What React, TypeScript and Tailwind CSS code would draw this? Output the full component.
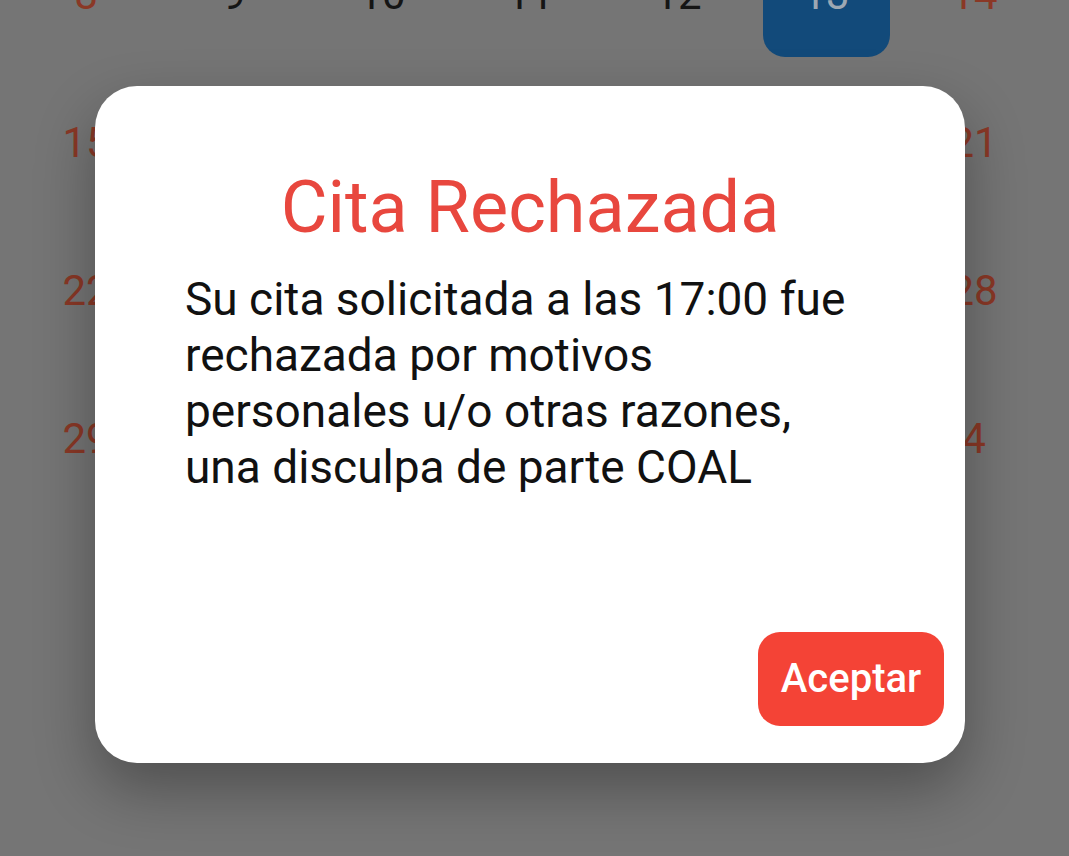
// Calendar behind a rejected-appointment dialog.
const rows: { n: string; tone: "red" | "dark" | "sel" }[][] = [
	[
		{ n: "8", tone: "red" },
		{ n: "9", tone: "dark" },
		{ n: "10", tone: "dark" },
		{ n: "11", tone: "dark" },
		{ n: "12", tone: "dark" },
		{ n: "13", tone: "sel" },
		{ n: "14", tone: "red" },
	],
	["15", "16", "17", "18", "19", "20", "21"].map((n) => ({ n, tone: "red" as const })),
	["22", "23", "24", "25", "26", "27", "28"].map((n) => ({ n, tone: "red" as const })),
	["29", "30", "1", "2", "3", "4", "4"].map((n, i) => ({ n: i === 6 ? "4" : n, tone: "red" as const })),
]

function Day({ n, tone }: { n: string; tone: "red" | "dark" | "sel" }) {
	if (tone === "sel") {
		return (
			<div className="flex h-[126px] w-[127px] items-center justify-center rounded-[22px] bg-[#124a7a] text-[#9ea8b3]">
				{n}
			</div>
		)
	}
	return <div className={tone === "red" ? "text-[#8a3826]" : "text-[#151515]"}>{n}</div>
}

export default function App() {
	return (
		<div className="relative h-[856px] w-[1069px] overflow-hidden bg-[#757575] font-['Roboto',sans-serif]">
			<div className="-mt-[80px] pl-[12px] text-[42px]">
				{rows.map((row, r) => (
					<div key={r} className="grid h-[148px] w-[1036px] grid-cols-7 items-center justify-items-center">
						{row.map((d, i) => (
							<Day key={i} n={d.n} tone={d.tone} />
						))}
					</div>
				))}
			</div>

			<div className="absolute left-[95px] top-[86px] flex h-[677px] w-[870px] flex-col rounded-[42px] bg-white shadow-[0_26px_60px_rgba(0,0,0,0.32)]">
				<h2 className="pt-[80px] text-center text-[72px] leading-[84px] text-[#e8473e]">Cita Rechazada</h2>
				<p className="mt-[21px] px-[90px] text-[46px] leading-[56px] text-[#111]">
					Su cita solicitada a las 17:00 fue rechazada por motivos personales u/o otras razones, una disculpa de parte COAL
				</p>
				<div className="flex flex-1 items-end justify-end pb-[37px] pr-[21px]">
					<button className="h-[94px] w-[186px] rounded-[22px] bg-[#f44336] text-[40px] font-medium text-white">
						Aceptar
					</button>
				</div>
			</div>
		</div>
	)
}
